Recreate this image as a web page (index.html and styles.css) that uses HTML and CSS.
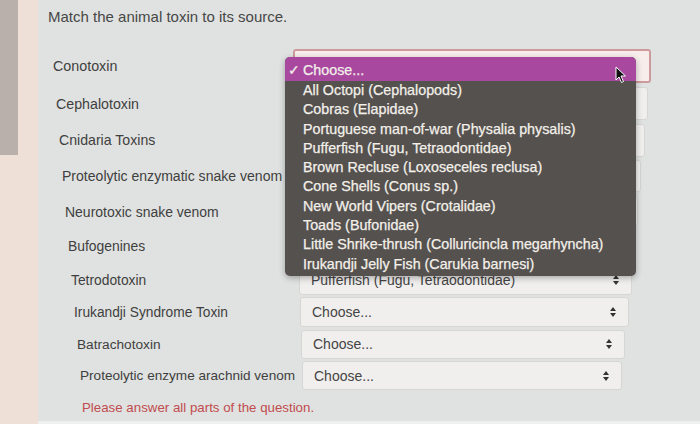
FILE: index.html
```html
<!DOCTYPE html>
<html lang="en">
<head>
    <meta charset="UTF-8">
    <meta name="viewport" content="width=device-width, initial-scale=1.0">
    <title>Match the animal toxin</title>
    <link rel="stylesheet" href="styles.css">
</head>
<body>

<div class="screen">
    <!-- left edge of the window behind -->
    <div class="side">
        <div class="side-block"></div>
    </div>

    <div class="panel">
        <h1 class="question">Match the animal toxin to its source.</h1>

        <div class="rows">
            <div class="row" style="--i:0">
                <span class="label">Conotoxin</span>
                <div class="select focused"><span>Choose...</span></div>
            </div>
            <div class="row" style="--i:1">
                <span class="label">Cephalotoxin</span>
                <div class="select"><span>Choose...</span></div>
            </div>
            <div class="row" style="--i:2">
                <span class="label">Cnidaria Toxins</span>
                <div class="select"><span>Choose...</span></div>
            </div>
            <div class="row" style="--i:3">
                <span class="label">Proteolytic enzymatic snake venom</span>
                <div class="select"><span>Choose...</span></div>
            </div>
            <div class="row" style="--i:4">
                <span class="label">Neurotoxic snake venom</span>
                <div class="select"><span>Choose...</span></div>
            </div>
            <div class="row" style="--i:5">
                <span class="label">Bufogenines</span>
                <div class="select"><span>Choose...</span></div>
            </div>
            <div class="row" style="--i:6">
                <span class="label">Tetrodotoxin</span>
                <div class="select">
                    <span>Pufferfish (Fugu, Tetraodontidae)</span>
                    <svg class="arrows" width="6" height="10" viewBox="0 0 6 10"><path d="M3 0 L6 4 L0 4 Z M0 6 L6 6 L3 10 Z"/></svg>
                </div>
            </div>
            <div class="row" style="--i:7">
                <span class="label">Irukandji Syndrome Toxin</span>
                <div class="select">
                    <span>Choose...</span>
                    <svg class="arrows" width="6" height="10" viewBox="0 0 6 10"><path d="M3 0 L6 4 L0 4 Z M0 6 L6 6 L3 10 Z"/></svg>
                </div>
            </div>
            <div class="row" style="--i:8">
                <span class="label">Batrachotoxin</span>
                <div class="select">
                    <span>Choose...</span>
                    <svg class="arrows" width="6" height="10" viewBox="0 0 6 10"><path d="M3 0 L6 4 L0 4 Z M0 6 L6 6 L3 10 Z"/></svg>
                </div>
            </div>
            <div class="row" style="--i:9">
                <span class="label">Proteolytic enzyme arachnid venom</span>
                <div class="select">
                    <span>Choose...</span>
                    <svg class="arrows" width="6" height="10" viewBox="0 0 6 10"><path d="M3 0 L6 4 L0 4 Z M0 6 L6 6 L3 10 Z"/></svg>
                </div>
            </div>
        </div>

        <p class="warning">Please answer all parts of the question.</p>
    </div>
</div>

<!-- open dropdown of the first select -->
<ul class="menu">
    <li class="selected"><span class="check">&#10003;</span>Choose...</li>
    <li>All Octopi (Cephalopods)</li>
    <li>Cobras (Elapidae)</li>
    <li>Portuguese man-of-war (Physalia physalis)</li>
    <li>Pufferfish (Fugu, Tetraodontidae)</li>
    <li>Brown Recluse (Loxoseceles reclusa)</li>
    <li>Cone Shells (Conus sp.)</li>
    <li>New World Vipers (Crotalidae)</li>
    <li>Toads (Bufonidae)</li>
    <li>Little Shrike-thrush (Colluricincla megarhyncha)</li>
    <li>Irukandji Jelly Fish (Carukia barnesi)</li>
</ul>

<svg class="cursor" width="12" height="18" viewBox="0 0 12 18">
    <path d="M1 1 L1 14 L4 11 L6.5 16.5 L8.5 15.5 L6 10 L10.5 10 Z" fill="#111" stroke="#fff" stroke-width="1"/>
</svg>

</body>
</html>
```

FILE: styles.css
```css
body {
    margin: 0;
    font-family: "Liberation Sans", Arial, sans-serif;
    background-color: #dfe2e0;
    overflow: hidden;
}
.screen {
    display: flex;
    height: 424px;
}
.side {
    width: 38px;
    flex-shrink: 0;
    background-color: #eedfd7;
}
.side-block {
    width: 18px;
    height: 155px;
    background-color: #bab0ab;
}
.panel {
    flex: 1;
    padding: 8px 0 0 10px;
    background-color: #dfe2e0;
    border-bottom: 3px solid #eef0ef;
    box-sizing: border-box;
}
.question {
    margin: 0 0 21px 0;
    font-size: 15px;
    font-weight: normal;
    line-height: 18px;
    color: #474747;
}
.row {
    display: flex;
    align-items: center;
    height: calc(38px - var(--i) * 0.8px);
    padding-left: calc(5px + var(--i) * 3px);
}
.label {
    width: calc(240px - var(--i) * 2px);
    flex-shrink: 0;
    white-space: nowrap;
    font-size: calc(14.3px - var(--i) * 0.08px);
    color: #3f3f3f;
}
.select {
    display: flex;
    align-items: center;
    justify-content: space-between;
    width: calc(358px - var(--i) * 4.2px);
    height: calc(34px - var(--i) * 0.6px);
    padding: 0 12px 0 11px;
    box-sizing: border-box;
    background-color: #f1efee;
    border: 1px solid #d6d6d4;
    border-radius: 3px;
    font-size: 14px;
    color: #444;
}
.select.focused {
    border: 2px solid #cf9a9c;
    background-color: #f7eeec;
}
.arrows {
    fill: #333;
}
.warning {
    margin: 8px 0 0 34px;
    font-size: 13.3px;
    line-height: 18px;
    color: #c24c4f;
}
.menu {
    position: absolute;
    left: 285px;
    top: 57px;
    width: 351px;
    height: 219px;
    margin: 0;
    padding: 0;
    list-style: none;
    background-color: #55514e;
    border-radius: 5px;
    overflow: hidden;
    box-shadow: 0 2px 6px rgba(0, 0, 0, 0.3);
}
.menu li {
    height: 19.3px;
    line-height: 19.3px;
    padding-left: 18px;
    font-size: 14.3px;
    color: #f3f0ea;
    white-space: nowrap;
    -webkit-text-stroke: 0.25px #f3f0ea;
}
.menu li.selected {
    height: 24px;
    line-height: 26px;
    padding-left: 3px;
    background-color: #a9489f;
}
.check {
    display: inline-block;
    width: 15px;
}
.cursor {
    position: absolute;
    left: 615px;
    top: 66px;
}
```
